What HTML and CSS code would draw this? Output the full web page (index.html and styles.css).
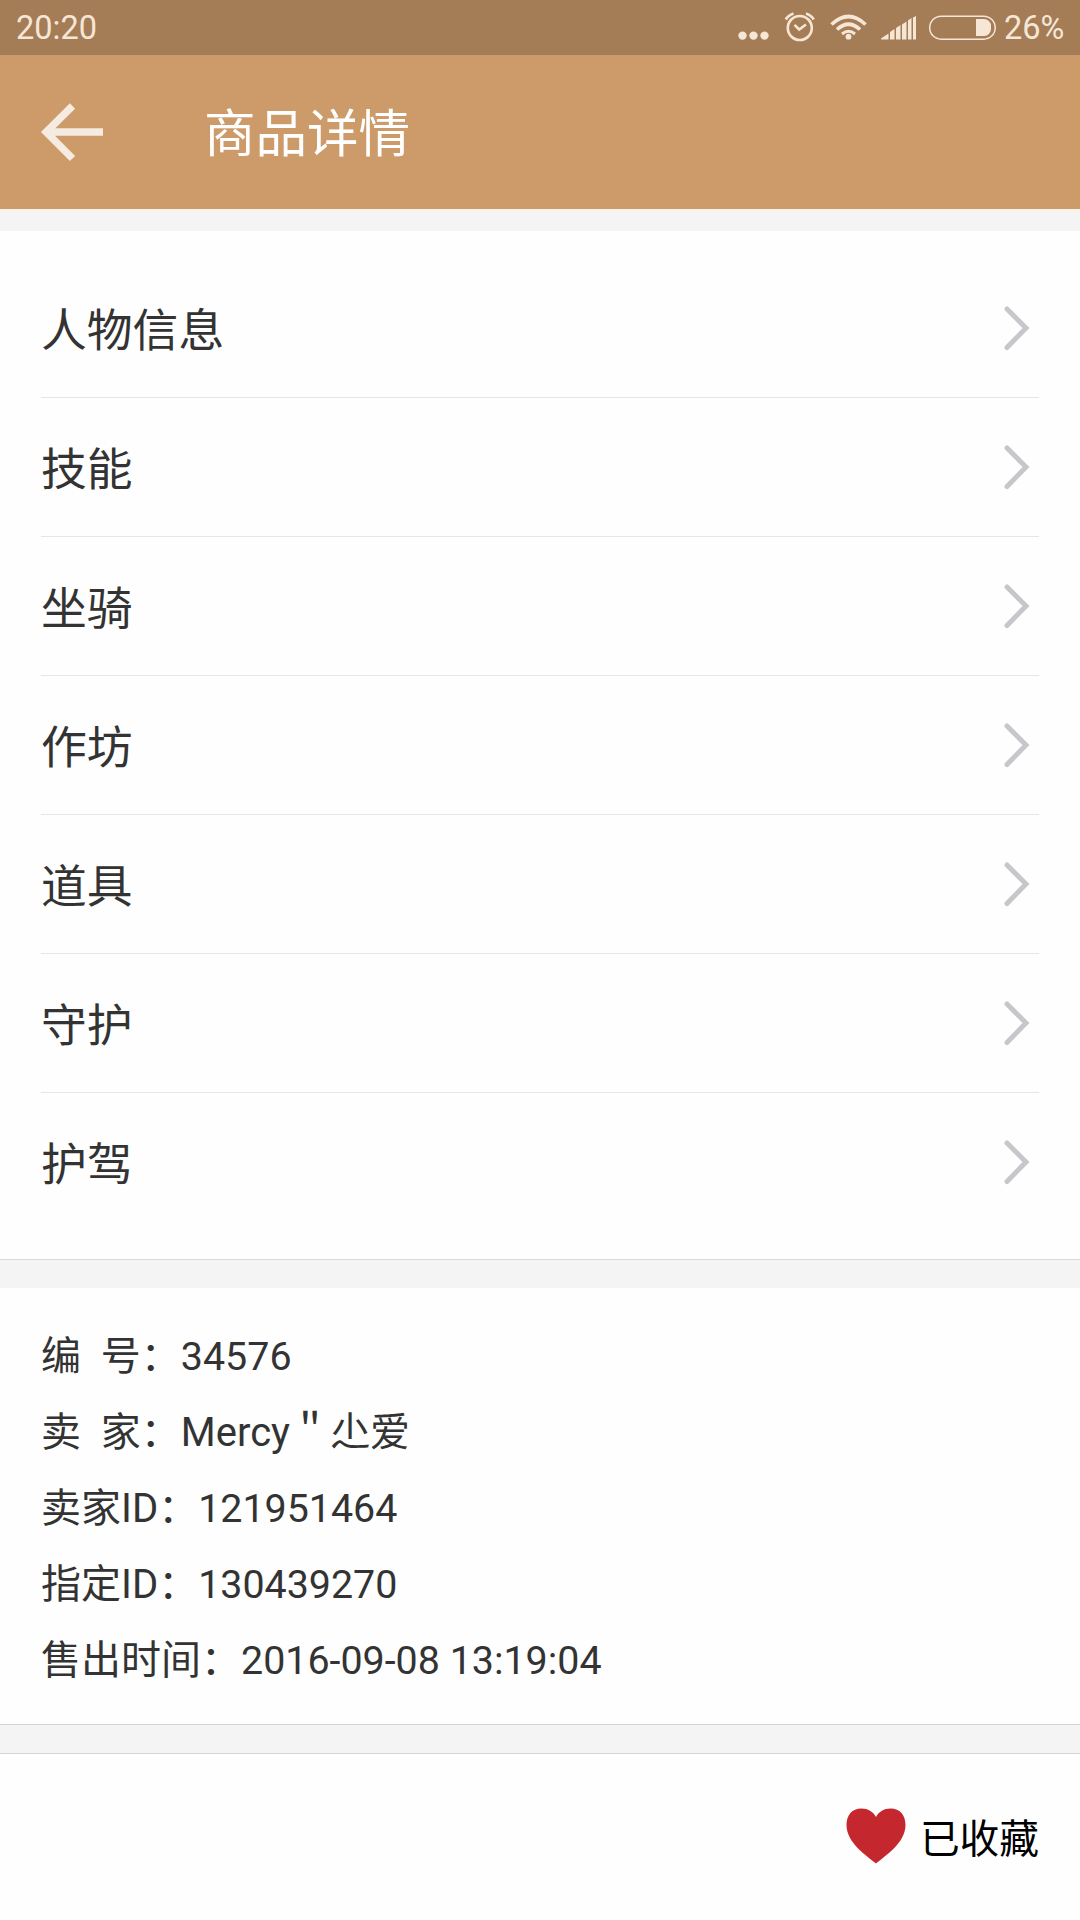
FILE: index.html
```html
<!DOCTYPE html>
<html lang="zh-CN">
<head>
<meta charset="utf-8">
<title>商品详情</title>
<link rel="stylesheet" href="styles.css">
</head>
<body>
<svg class="defs" width="0" height="0" aria-hidden="true">
  <symbol id="chevron" viewBox="0 0 30 50"><path d="M5 6L24 25L5 44.500" fill="none" stroke="#c7c7cb" stroke-width="5" stroke-linecap="round"/></symbol>
</svg>
<header class="status">
  <span class="clock">20:20</span>
  <svg class="indicators" viewBox="0 0 266 55" width="266" height="55" fill="#f6e6d6">
    <circle cx="8.500" cy="35.600" r="4.200"/><circle cx="19.500" cy="35.600" r="4.200"/><circle cx="30.500" cy="35.600" r="4.200"/>
    <g fill="none" stroke="#f6e6d6" stroke-width="2.600">
      <circle cx="65.800" cy="28" r="12"/>
      <path d="M60.500 24.800L65.200 29.500L72 24.500M51.800 19.500Q54 15.500 59.500 13.600M72 13.600Q77.500 15.500 79.800 19.500"/>
    </g>
    <g fill="none" stroke="#f6e6d6" stroke-width="3.700">
      <path d="M97.500 24.500Q114.500 8.500 131.500 24.500M103 29.500Q114.500 19 126 29.500"/>
      <path d="M108 34Q114.500 28.500 121 34" stroke-width="3"/>
    </g>
    <circle cx="114.500" cy="36.700" r="2.900"/>
    <path d="M147 39.500V38.500L154.500 33.500V39.500ZM156 39.500V32L160.500 29V39.500ZM162 39.500V28L166.500 25V39.500ZM168 39.500V24.500L172.500 21.500V39.500ZM174 39.500V20.500L177.500 18V39.500ZM179 39.500V17.500L182 16V39.500Z"/>
    <rect x="195.700" y="16.200" width="65.500" height="23" rx="11.500" fill="none" stroke="#f6e6d6" stroke-width="1.500"/>
    <path d="M242 19H249.500A7 7 0 0 1 257 26.500V28.500A7 7 0 0 1 249.500 36H242Z"/>
  </svg>
  <span class="percent">26%</span>
</header>
<nav class="appbar">
  <svg class="back" viewBox="0 0 64 60" width="64" height="60"><path d="M63 30H7M32.500 4L6.200 30L32.500 56.500" fill="none" stroke="#f6ebe1" stroke-width="7.400"/></svg>
  <h1 class="title">商品详情</h1>
</nav>
<div class="gap gap-first"></div>
<ul class="menu">
  <li class="item"><span>人物信息</span><svg class="chevron"><use href="#chevron"/></svg></li>
  <li class="item"><span>技能</span><svg class="chevron"><use href="#chevron"/></svg></li>
  <li class="item"><span>坐骑</span><svg class="chevron"><use href="#chevron"/></svg></li>
  <li class="item"><span>作坊</span><svg class="chevron"><use href="#chevron"/></svg></li>
  <li class="item"><span>道具</span><svg class="chevron"><use href="#chevron"/></svg></li>
  <li class="item"><span>守护</span><svg class="chevron"><use href="#chevron"/></svg></li>
  <li class="item"><span>护驾</span><svg class="chevron"><use href="#chevron"/></svg></li>
</ul>
<div class="gap gap-middle"></div>
<section class="info">
  <p class="line">编  号：<span class="value">34576</span></p>
  <p class="line">卖  家：Mercy＂尐爱</p>
  <p class="line">卖家ID：<span class="value">121951464</span></p>
  <p class="line">指定ID：<span class="value">130439270</span></p>
  <p class="line">售出时间：<span class="value">2016-09-08 13:19:04</span></p>
</section>
<div class="gap gap-last"></div>
<footer class="favorite">
  <svg class="heart" viewBox="0 0 60 56" width="60" height="56"><path d="M30 55.500C21 48 0.500 35 0.500 17C0.500 7 6 0.500 15.500 0.500C22 0.500 27 3.500 30 9C33 3.500 38 0.500 44.500 0.500C54 0.500 59.500 7 59.500 17C59.500 35 39 48 30 55.500Z" fill="#c5272f"/></svg>
  <span>已收藏</span>
</footer>
</body>
</html>
```
FILE: styles.css
```css
* { box-sizing: border-box; margin: 0; padding: 0; }
body {
  width: 1080px;
  height: 1920px;
  display: flex;
  flex-direction: column;
  overflow: hidden;
  background: #fefefe;
  color: #333;
  font-family: Roboto, "Noto Sans CJK SC", sans-serif;
}
.defs { position: absolute; }
.status {
  height: 55px;
  display: flex;
  align-items: center;
  padding: 0 16px;
  background: #a47d56;
  color: #f6e6d6;
  font-size: 32.500px;
  line-height: 55px;
}
.clock { flex: 1; padding-top: 2px; }
.indicators { margin-right: 4px; }
.percent { width: 60px; padding-top: 2px; white-space: nowrap; }
.appbar {
  height: 154px;
  display: flex;
  align-items: center;
  padding-left: 40px;
  background: #cd9b6a;
}
.back { margin-right: 100px; }
.title {
  padding-top: 5px;
  color: #fff;
  font-size: 51.500px;
  font-weight: 400;
  line-height: 76px;
}
.gap { background: #f4f4f4; flex: none; }
.gap-first { height: 22px; border-top: 2px solid #fbf0e5; }
.gap-middle { height: 29px; border-top: 1px solid #d9dbda; }
.gap-last { height: 30px; border-top: 1px solid #d5d5d5; border-bottom: 1px solid #d5d5d5; }
.menu { height: 1028px; padding: 28px 41px 0; list-style: none; }
.item {
  height: 139px;
  display: flex;
  align-items: center;
  justify-content: space-between;
  padding-right: 7px;
  border-bottom: 1px solid #e6e6e6;
  font-size: 45.800px;
  line-height: 66px;
}
.item span { padding-top: 7px; }
.item:last-child { border-bottom-color: transparent; }
.chevron { width: 30px; height: 50px; }
.info { height: 436px; padding: 31px 41px 0; }
.line { height: 76px; font-size: 40px; line-height: 76px; white-space: pre; }
.value { font-size: 39.400px; }
.favorite {
  height: 166px;
  display: flex;
  align-items: center;
  justify-content: flex-end;
  gap: 14px;
  padding: 0 41px 3px 0;
  color: #000;
  font-size: 39.700px;
}
```
